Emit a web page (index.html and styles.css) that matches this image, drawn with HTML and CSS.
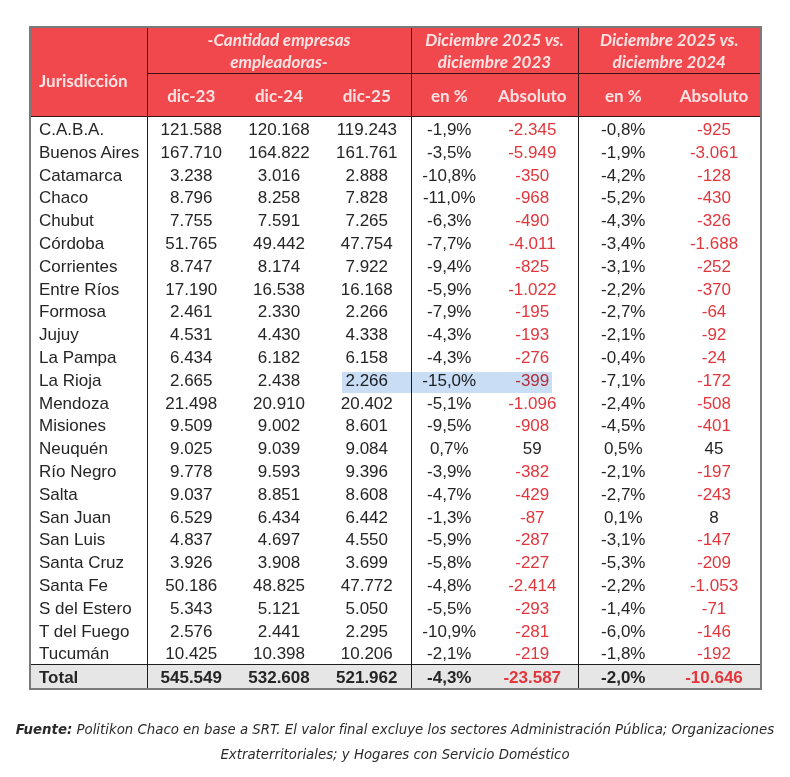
FILE: index.html
```html
<!DOCTYPE html>
<html lang="es">
<head>
<meta charset="utf-8">
<title>Empresas empleadoras</title>
<link rel="stylesheet" href="styles.css">
</head>
<body>
<div class="wrap">
  <table class="tbl">
    <colgroup>
      <col class="c-j"><col class="c-q"><col class="c-q"><col class="c-q">
      <col class="c-p1"><col class="c-a1"><col class="c-p2"><col class="c-a2">
    </colgroup>
    <thead>
      <tr class="h1">
        <th rowspan="2" class="jur">Jurisdicción</th>
        <th colspan="3" class="it">-Cantidad empresas<br>empleadoras-</th>
        <th colspan="2" class="it">Diciembre 2025 vs.<br>diciembre 2023</th>
        <th colspan="2" class="it">Diciembre 2025 vs.<br>diciembre 2024</th>
      </tr>
      <tr class="h2">
        <th class="gl">dic-23</th><th>dic-24</th><th>dic-25</th>
        <th class="gl">en %</th><th>Absoluto</th>
        <th class="gl">en %</th><th>Absoluto</th>
      </tr>
    </thead>
    <tbody>
      <tr><td class="n">C.A.B.A.</td><td class="gl">121.588</td><td>120.168</td><td>119.243</td><td class="gl">-1,9%</td><td class="r">-2.345</td><td class="gl">-0,8%</td><td class="r">-925</td></tr>
      <tr><td class="n">Buenos Aires</td><td class="gl">167.710</td><td>164.822</td><td>161.761</td><td class="gl">-3,5%</td><td class="r">-5.949</td><td class="gl">-1,9%</td><td class="r">-3.061</td></tr>
      <tr><td class="n">Catamarca</td><td class="gl">3.238</td><td>3.016</td><td>2.888</td><td class="gl">-10,8%</td><td class="r">-350</td><td class="gl">-4,2%</td><td class="r">-128</td></tr>
      <tr><td class="n">Chaco</td><td class="gl">8.796</td><td>8.258</td><td>7.828</td><td class="gl">-11,0%</td><td class="r">-968</td><td class="gl">-5,2%</td><td class="r">-430</td></tr>
      <tr><td class="n">Chubut</td><td class="gl">7.755</td><td>7.591</td><td>7.265</td><td class="gl">-6,3%</td><td class="r">-490</td><td class="gl">-4,3%</td><td class="r">-326</td></tr>
      <tr><td class="n">Córdoba</td><td class="gl">51.765</td><td>49.442</td><td>47.754</td><td class="gl">-7,7%</td><td class="r">-4.011</td><td class="gl">-3,4%</td><td class="r">-1.688</td></tr>
      <tr><td class="n">Corrientes</td><td class="gl">8.747</td><td>8.174</td><td>7.922</td><td class="gl">-9,4%</td><td class="r">-825</td><td class="gl">-3,1%</td><td class="r">-252</td></tr>
      <tr><td class="n">Entre Ríos</td><td class="gl">17.190</td><td>16.538</td><td>16.168</td><td class="gl">-5,9%</td><td class="r">-1.022</td><td class="gl">-2,2%</td><td class="r">-370</td></tr>
      <tr><td class="n">Formosa</td><td class="gl">2.461</td><td>2.330</td><td>2.266</td><td class="gl">-7,9%</td><td class="r">-195</td><td class="gl">-2,7%</td><td class="r">-64</td></tr>
      <tr><td class="n">Jujuy</td><td class="gl">4.531</td><td>4.430</td><td>4.338</td><td class="gl">-4,3%</td><td class="r">-193</td><td class="gl">-2,1%</td><td class="r">-92</td></tr>
      <tr><td class="n">La Pampa</td><td class="gl">6.434</td><td>6.182</td><td>6.158</td><td class="gl">-4,3%</td><td class="r">-276</td><td class="gl">-0,4%</td><td class="r">-24</td></tr>
      <tr><td class="n">La Rioja</td><td class="gl">2.665</td><td>2.438</td><td>2.266</td><td class="gl">-15,0%</td><td class="r">-399</td><td class="gl">-7,1%</td><td class="r">-172</td></tr>
      <tr><td class="n">Mendoza</td><td class="gl">21.498</td><td>20.910</td><td>20.402</td><td class="gl">-5,1%</td><td class="r">-1.096</td><td class="gl">-2,4%</td><td class="r">-508</td></tr>
      <tr><td class="n">Misiones</td><td class="gl">9.509</td><td>9.002</td><td>8.601</td><td class="gl">-9,5%</td><td class="r">-908</td><td class="gl">-4,5%</td><td class="r">-401</td></tr>
      <tr><td class="n">Neuquén</td><td class="gl">9.025</td><td>9.039</td><td>9.084</td><td class="gl">0,7%</td><td>59</td><td class="gl">0,5%</td><td>45</td></tr>
      <tr><td class="n">Río Negro</td><td class="gl">9.778</td><td>9.593</td><td>9.396</td><td class="gl">-3,9%</td><td class="r">-382</td><td class="gl">-2,1%</td><td class="r">-197</td></tr>
      <tr><td class="n">Salta</td><td class="gl">9.037</td><td>8.851</td><td>8.608</td><td class="gl">-4,7%</td><td class="r">-429</td><td class="gl">-2,7%</td><td class="r">-243</td></tr>
      <tr><td class="n">San Juan</td><td class="gl">6.529</td><td>6.434</td><td>6.442</td><td class="gl">-1,3%</td><td class="r">-87</td><td class="gl">0,1%</td><td>8</td></tr>
      <tr><td class="n">San Luis</td><td class="gl">4.837</td><td>4.697</td><td>4.550</td><td class="gl">-5,9%</td><td class="r">-287</td><td class="gl">-3,1%</td><td class="r">-147</td></tr>
      <tr><td class="n">Santa Cruz</td><td class="gl">3.926</td><td>3.908</td><td>3.699</td><td class="gl">-5,8%</td><td class="r">-227</td><td class="gl">-5,3%</td><td class="r">-209</td></tr>
      <tr><td class="n">Santa Fe</td><td class="gl">50.186</td><td>48.825</td><td>47.772</td><td class="gl">-4,8%</td><td class="r">-2.414</td><td class="gl">-2,2%</td><td class="r">-1.053</td></tr>
      <tr><td class="n">S del Estero</td><td class="gl">5.343</td><td>5.121</td><td>5.050</td><td class="gl">-5,5%</td><td class="r">-293</td><td class="gl">-1,4%</td><td class="r">-71</td></tr>
      <tr><td class="n">T del Fuego</td><td class="gl">2.576</td><td>2.441</td><td>2.295</td><td class="gl">-10,9%</td><td class="r">-281</td><td class="gl">-6,0%</td><td class="r">-146</td></tr>
      <tr><td class="n">Tucumán</td><td class="gl">10.425</td><td>10.398</td><td>10.206</td><td class="gl">-2,1%</td><td class="r">-219</td><td class="gl">-1,8%</td><td class="r">-192</td></tr>
    </tbody>
    <tfoot>
      <tr class="tot"><td class="n">Total</td><td class="gl">545.549</td><td>532.608</td><td>521.962</td><td class="gl">-4,3%</td><td class="r">-23.587</td><td class="gl">-2,0%</td><td class="r">-10.646</td></tr>
    </tfoot>
  </table>
  <div class="sel"></div>
</div>
<p class="src"><b>Fuente:</b> Politikon Chaco en base a SRT. El valor final excluye los sectores Administración Pública; Organizaciones<br>Extraterritoriales; y Hogares con Servicio Doméstico</p>
</body>
</html>
```
FILE: styles.css
```css
html, body {
  margin: 0;
  padding: 0;
  background: #ffffff;
}
body {
  padding: 26px 0 0 29px;
}
.wrap {
  position: relative;
  width: 732px;
}
.tbl {
  border-collapse: collapse;
  table-layout: fixed;
  width: 732px;
  border: 2px solid #7a7a7a;
  font-family: "Liberation Sans", Arial, sans-serif;
  font-size: 17px;
  color: #252525;
}
.c-j { width: 117px; }
.c-q { width: 88px; }
.c-p1 { width: 76px; }
.c-a1 { width: 91px; }
.c-p2 { width: 90px; }
.c-a2 { width: 93px; }

thead th {
  background: #f1484e;
  color: #fde3e3;
  font-family: Lato, "Open Sans", sans-serif;
  font-weight: 700;
  font-size: 17px;
  padding: 0;
  border-left: 1.5px solid #3a1212;
  border-bottom: 1.5px solid #3a1212;
}
thead tr.h1 th { height: 44px; line-height: 22px; }
thead tr.h2 th { height: 42px; border-left: none; }
thead tr.h2 th.gl { border-left: 1.5px solid #3a1212; }
thead th.it { font-style: italic; padding-top: 1px; }
thead th.jur {
  border-left: none;
  text-align: left;
  padding: 18px 0 0 8px;
}

tbody td, tfoot td {
  height: 19.8px;
  padding: 3px 0 0 0;
  text-align: center;
  line-height: 19.8px;
  white-space: nowrap;
}
td.gl { border-left: 1.5px solid #1e1e1e; }
td.n { text-align: left; padding-left: 8px; }
td.r { color: #e2363c; }

tr.tot td {
  background: #e6e6e6;
  font-weight: 700;
  height: 20px;
  border-top: 1.5px solid #1e1e1e;
}

.sel {
  position: absolute;
  left: 313px;
  top: 346px;
  width: 210px;
  height: 21px;
  background: #c9ddf5;
  mix-blend-mode: multiply;
  pointer-events: none;
}

.src {
  margin: 26px 0 0 -29px;
  width: 790px;
  text-align: center;
  font-family: "Liberation Sans Narrow", "DejaVu Sans Condensed", "Liberation Sans", sans-serif;
  font-style: italic;
  font-size: 14.8px;
  line-height: 25px;
  color: #2a2a2a;
}
.src b { font-weight: 700; }
```
